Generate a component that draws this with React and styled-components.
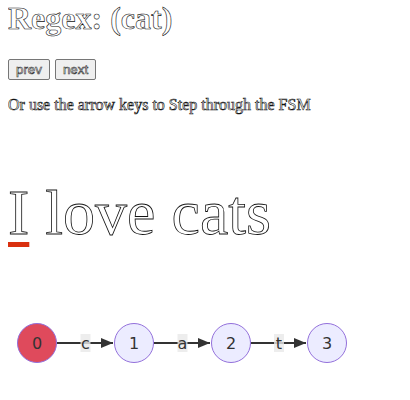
import React from "react";
import styled, { createGlobalStyle } from "styled-components";

const Global = createGlobalStyle`
  body {
    margin: 0 8px;
    background: #fff;
    font-family: "Liberation Serif", "Times New Roman", serif;
    color: #fff;
    -webkit-text-stroke: 0.6px #111;
  }
`;

const Title = styled.h1`
  font-size: 32px;
  font-weight: bold;
  margin: 0 0 22px;
`;

const Controls = styled.div`
  display: flex;
  gap: 5px;
`;

const Button = styled.button`
  font-family: "Liberation Sans", Arial, sans-serif;
  font-size: 13.33px;
  height: 21px;
  padding: 1px 7px;
  color: #fff;
  -webkit-text-stroke: 0.6px #333;
  background: #efefef;
  border: 1px solid #767676;
  border-radius: 2px;
`;

const Hint = styled.p`
  font-size: 16px;
  margin: 16px 0 0;
`;

const Sentence = styled.div`
  font-size: 64px;
  margin-top: 62px;
  -webkit-text-stroke: 0.8px #111;
`;

const Current = styled.span`
  text-decoration: underline;
  text-decoration-color: #d9300f;
  text-decoration-thickness: 5px;
  text-underline-offset: 8px;
`;

const Diagram = styled.svg`
  display: block;
  margin-top: 63px;
  -webkit-text-stroke: 0;
  font-family: "DejaVu Sans", Verdana, sans-serif;
`;

const nodes = [29, 126, 223, 319];
const labels = ["c", "a", "t"];

function Fsm({ current }) {
  return (
    <Diagram width="360" height="60" viewBox="0 0 360 60">
      <defs>
        <marker id="arrow" viewBox="0 0 12 10" refX="12" refY="5" markerWidth="12" markerHeight="10" markerUnits="userSpaceOnUse" orient="auto">
          <path d="M0 0 L12 5 L0 10 z" fill="#333" />
        </marker>
      </defs>
      {labels.map((l, i) => {
        const x1 = nodes[i] + 20;
        const x2 = nodes[i + 1] - 20;
        const mid = (x1 + x2) / 2;
        return (
          <g key={l}>
            <line x1={x1} y1="30" x2={x2 - 1} y2="30" stroke="#333" strokeWidth="2" markerEnd="url(#arrow)" />
            <rect x={mid - 5} y="21" width="10" height="18" fill="rgba(232,232,232,0.8)" />
            <text x={mid} y="36" textAnchor="middle" fontSize="16" fill="#333">{l}</text>
          </g>
        );
      })}
      {nodes.map((x, i) => (
        <g key={i}>
          <circle cx={x} cy="30" r="19.5" fill={i === current ? "#df4a5c" : "#ECECFF"} stroke="#9370DB" strokeWidth="1" />
          <text x={x} y="36" textAnchor="middle" fontSize="16" fill="#333">{i}</text>
        </g>
      ))}
    </Diagram>
  );
}

export default function App() {
  return (
    <>
      <Global />
      <Title>Regex: (cat)</Title>
      <Controls>
        <Button>prev</Button>
        <Button>next</Button>
      </Controls>
      <Hint>Or use the arrow keys to Step through the FSM</Hint>
      <Sentence>
        <Current>I</Current> love cats
      </Sentence>
      <Fsm current={0} />
    </>
  );
}
